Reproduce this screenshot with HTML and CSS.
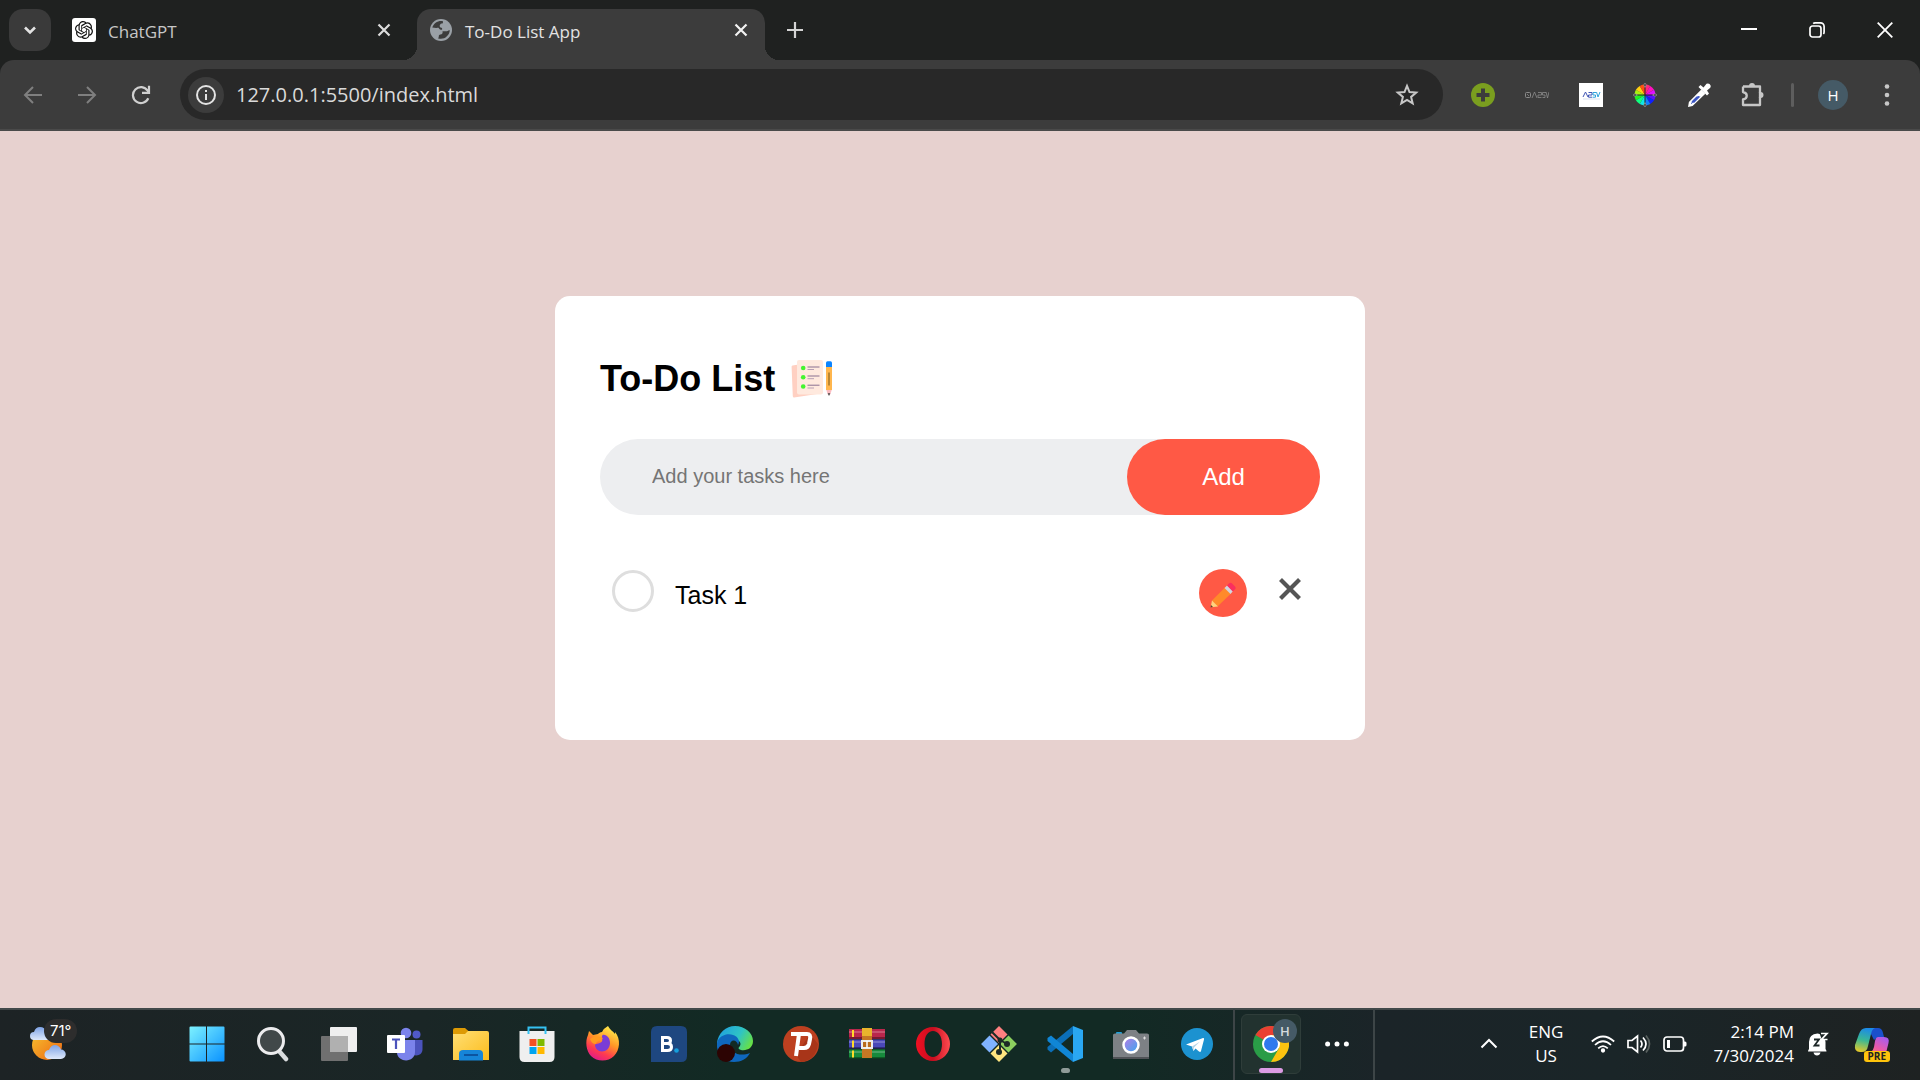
FILE: index.html
```html
<!DOCTYPE html>
<html lang="en">
<head>
<meta charset="utf-8">
<title>To-Do List App</title>
<link rel="stylesheet" href="styles.css">
</head>
<body>
<header class="browser">
  <div class="tab-strip">
    <button class="tab-search" aria-label="Search tabs"><svg width="14" height="14" viewBox="0 0 14 14"><path d="M2 4.5l5 5 5-5" fill="none" stroke="#e3e3e3" stroke-width="2.6"/></svg></button>
    <div class="tab">
      <svg class="favicon" width="24" height="24" viewBox="0 0 24 24"><rect width="24" height="24" rx="3" fill="#fff"/><path transform="translate(3 3) scale(.75)" fill="#111" d="M22.2819 9.8211a5.9847 5.9847 0 0 0-.5157-4.9108 6.0462 6.0462 0 0 0-6.5098-2.9A6.0651 6.0651 0 0 0 4.9807 4.1818a5.9847 5.9847 0 0 0-3.9977 2.9 6.0462 6.0462 0 0 0 .7427 7.0966 5.98 5.98 0 0 0 .511 4.9107 6.051 6.051 0 0 0 6.5146 2.9001A5.9847 5.9847 0 0 0 13.2599 24a6.0557 6.0557 0 0 0 5.7718-4.2058 5.9894 5.9894 0 0 0 3.9977-2.9001 6.0557 6.0557 0 0 0-.7475-7.0729zm-9.022 12.6081a4.4755 4.4755 0 0 1-2.8764-1.0408l.1419-.0804 4.7783-2.7582a.7948.7948 0 0 0 .3927-.6813v-6.7369l2.02 1.1686a.071.071 0 0 1 .038.052v5.5826a4.504 4.504 0 0 1-4.4945 4.4944zm-9.6607-4.1254a4.4708 4.4708 0 0 1-.5346-3.0137l.142.0852 4.783 2.7582a.7712.7712 0 0 0 .7806 0l5.8428-3.3685v2.3324a.0804.0804 0 0 1-.0332.0615L9.74 19.9502a4.4992 4.4992 0 0 1-6.1408-1.6464zM2.3408 7.8956a4.485 4.485 0 0 1 2.3655-1.9728V11.6a.7664.7664 0 0 0 .3879.6765l5.8144 3.3543-2.0201 1.1685a.0757.0757 0 0 1-.071 0l-4.8303-2.7865A4.504 4.504 0 0 1 2.3408 7.872zm16.5963 3.8558L13.1038 8.364 15.1192 7.2a.0757.0757 0 0 1 .071 0l4.8303 2.7913a4.4944 4.4944 0 0 1-.6765 8.1042v-5.6772a.79.79 0 0 0-.407-.667zm2.0107-3.0231l-.142-.0852-4.7735-2.7818a.7759.7759 0 0 0-.7854 0L9.409 9.2297V6.8974a.0662.0662 0 0 1 .0284-.0615l4.8303-2.7866a4.4992 4.4992 0 0 1 6.6802 4.66zM8.3065 12.863l-2.02-1.1638a.0804.0804 0 0 1-.038-.0567V6.0742a4.4992 4.4992 0 0 1 7.3757-3.4537l-.142.0805L8.704 5.459a.7948.7948 0 0 0-.3927.6813zm1.0976-2.3654l2.602-1.4998 2.6069 1.4998v2.9994l-2.5974 1.4997-2.6067-1.4997Z"/></svg>
      <span class="tab-title">ChatGPT</span>
      <button class="tab-close" aria-label="Close ChatGPT"><svg width="14" height="14" viewBox="0 0 14 14"><path d="M1.5 1.5l11 11M12.5 1.5l-11 11" stroke="#dcdcdc" stroke-width="2.2"/></svg></button>
    </div>
    <div class="tab tab-active">
      <svg class="favicon" width="24" height="24" viewBox="0 0 24 24"><circle cx="12" cy="12" r="11" fill="#9aa0a6"/><path fill="#3c3c3c" d="M13.5 3C9 2.3 4.6 5 3.300 9.600c1.800.3 4.200.4 6.200.2.800 1.700 2 2 3.500 2 .4-.9.200-1.700-.6-2.100-1.500-.3-2-1.300-1.600-2.500.4-1.300 1.400-1.700 2.700-1.700.700-.8.700-1.800 0-2.500zM20.800 12.200c-1.100-.2-1.900.7-2.900 1-1.500.500-2.800-.3-4.500.200.700 1.300-.2 2.700-2 3.100-1.300.2-1.700 1-1.600 2 .1.800-.2 1.300-.9 1.700 5.600 2 11.500-2 11.900-8z"/></svg>
      <span class="tab-title">To-Do List App</span>
      <button class="tab-close" aria-label="Close To-Do List App"><svg width="14" height="14" viewBox="0 0 14 14"><path d="M1.5 1.5l11 11M12.5 1.5l-11 11" stroke="#f2f2f2" stroke-width="2.2"/></svg></button>
    </div>
    <button class="new-tab" aria-label="New tab"><svg width="16" height="16" viewBox="0 0 16 16"><path d="M8 0v16M0 8h16" stroke="#d4d4d4" stroke-width="2.2"/></svg></button>
    <div class="window-controls">
      <button aria-label="Minimize"><svg width="16" height="16" viewBox="0 0 16 16"><path d="M0 7h16" stroke="#fff" stroke-width="2"/></svg></button>
      <button aria-label="Restore"><svg width="16" height="16" viewBox="0 0 16 16" fill="none" stroke="#fff" stroke-width="1.7"><rect x="1" y="4" width="11" height="11" rx="2.5"/><path d="M4.2 1.6C4.8 1 5.5.9 6 .9h5.500a3.600 3.600 0 0 1 3.600 3.600V10c0 .8-.2 1.500-.7 2"/></svg></button>
      <button aria-label="Close"><svg width="16" height="16" viewBox="0 0 16 16"><path d="M.7.7l14.600 14.600M15.300.7L.7 15.300" stroke="#fff" stroke-width="1.8"/></svg></button>
    </div>
  </div>
  <div class="toolbar">
    <nav class="nav-buttons">
      <button aria-label="Back"><svg width="20" height="20" viewBox="0 0 20 20" fill="none" stroke="#7f7f7f" stroke-width="2"><path d="M19 10H2.500M10 2l-8 8 8 8"/></svg></button>
      <button aria-label="Forward"><svg width="20" height="20" viewBox="0 0 20 20" fill="none" stroke="#7f7f7f" stroke-width="2"><path d="M1 10h16.500M10 2l8 8-8 8"/></svg></button>
      <button aria-label="Reload"><svg width="20" height="20" viewBox="0 0 20 20" fill="none" stroke="#d0d0d0" stroke-width="2.2"><path d="M17.300 13.300A8 8 0 1 1 16.600 5.600L17.800 7M18 .8v7h-7"/></svg></button>
    </nav>
    <form class="address-bar">
      <button type="button" class="site-info" aria-label="View site information"><svg width="20" height="20" viewBox="0 0 20 20"><circle cx="10" cy="10" r="9" fill="none" stroke="#e3e3e3" stroke-width="2"/><path d="M9 9h2v6H9zM9 5h2v2H9z" fill="#e3e3e3"/></svg></button>
      <input class="url" type="text" aria-label="Address" value="127.0.0.1:5500/index.html">
      <button type="button" class="bookmark" aria-label="Bookmark this tab"><svg width="24" height="24" viewBox="0 0 24 24"><path d="M12 2.900l2.500 6.200 6.700.5-5.100 4.300 1.600 6.500L12 16.900l-5.700 3.500 1.600-6.500-5.100-4.300 6.700-.5z" fill="none" stroke="#c7c7c7" stroke-width="2"/></svg></button>
    </form>
    <div class="extensions">
      <button aria-label="Add extension"><svg width="24" height="24" viewBox="0 0 24 24"><circle cx="12" cy="12" r="12" fill="#7a9e1f"/><path d="M12 5.500v13M5.500 12h13" stroke="#3c3c3c" stroke-width="4"/></svg></button>
      <button aria-label="APSV recorder"><svg width="24" height="24" viewBox="0 0 24 24" fill="none" stroke="#8b8b8b"><rect x=".5" y="9.500" width="5" height="5" rx="1"/><path d="M2 11l2 2M7 15l2.500-6 2.500 6M13 9.500h3.500v2.500H13v2.500h3.500M21 9.500h-3.500V12H20v2.500h-2.500M21 9l1.500 6L24 9" stroke-width=".8"/></svg></button>
      <button aria-label="APSV"><svg width="24" height="24" viewBox="0 0 24 24" fill="none"><rect width="24" height="24" fill="#fff"/><path d="M4 14l2.500-5L9 14M9.500 9.500H13V12H9.500v2.200H13" stroke="#4055b5" stroke-width="1"/><path d="M17 9.500h-3V12h2.500v2.200h-3M17.500 9l1.500 5 2-5" stroke="#2ea3dc" stroke-width="1"/><path d="M4 16h17" stroke="#c9d4ea" stroke-width=".7"/></svg></button>
      <button aria-label="Color wheel"><svg width="24" height="24" viewBox="-12 -12 24 24"><g id="wheel"><path d="M0 0V-10.500A10.500 10.500 0 0 1 5.250-9.090z" fill="#ff2a7a"/><path d="M0 0L5.250-9.090A10.500 10.500 0 0 1 9.090-5.250z" fill="#ff10c0"/><path d="M0 0L9.090-5.250A10.500 10.500 0 0 1 10.500 0z" fill="#e010ff"/><path d="M0 0H10.500A10.500 10.500 0 0 1 9.090 5.250z" fill="#5a10ff"/><path d="M0 0L9.090 5.250A10.500 10.500 0 0 1 5.250 9.090z" fill="#1020ff"/><path d="M0 0L5.250 9.090A10.500 10.500 0 0 1 0 10.500z" fill="#1080ff"/><path d="M0 0V10.500A10.500 10.500 0 0 1-5.250 9.090z" fill="#10e8e8"/><path d="M0 0L-5.250 9.090A10.500 10.500 0 0 1-9.090 5.250z" fill="#10ff80"/><path d="M0 0L-9.090 5.250A10.500 10.500 0 0 1-10.500 0z" fill="#20f020"/><path d="M0 0H-10.500A10.500 10.500 0 0 1-9.090-5.250z" fill="#a8f010"/><path d="M0 0L-9.090-5.250A10.500 10.500 0 0 1-5.250-9.090z" fill="#ffd010"/><path d="M0 0L-5.250-9.090A10.500 10.500 0 0 1 0-10.500z" fill="#ff5010"/></g><path d="M0-8v16M-8 0H8" stroke="#222" stroke-width="1"/><path d="M0-12l1.300 2L0-7.500-1.300-10zM0 12l1.300-2L0 7.500-1.300 10zM-12 0l2-1.300L-7.500 0-10 1.300zM12 0l-2-1.300L7.500 0l2.500 1.300z" fill="#333" stroke="#999" stroke-width=".7"/></svg></button>
      <button aria-label="Eyedropper"><svg width="24" height="24" viewBox="0 0 24 24"><path d="M15 7.500L3 19.500 2.500 22.500 5 22 17.500 9.800" fill="#3c56c4" stroke="#fff" stroke-width="2.400"/><path d="M8.500 13L14.500 7l3 3-3 3z" fill="#fff"/><path d="M4.500 18.500l5-5h4l-6.500 6.500z" fill="#3c56c4"/><path d="M11.500 4l2-2 3 2.500L19.500.8Q22.500-.2 23.600 2.500 24 4 23 5L20 7.500l2 3-2 2z" fill="#fff"/></svg></button>
      <button aria-label="Extensions"><svg width="26" height="26" viewBox="0 0 26 26"><path d="M3 4.500h17v6.300M20 15.200V23H3v-5.500c5-1 5-6.500 0-7.500V4.500" fill="none" stroke="#c7c7c7" stroke-width="2.300" stroke-linejoin="round"/><path d="M9 4a3 3 0 0 1 6 0zM20.500 10a3 3 0 0 1 0 6z" fill="#c7c7c7"/><path d="M20 10v6" stroke="#c7c7c7" stroke-width="2.300"/></svg></button>
    </div>
    <span class="toolbar-divider"></span>
    <button class="avatar" aria-label="Profile">H</button>
    <button class="menu" aria-label="Menu"><svg width="6" height="22" viewBox="0 0 6 22" fill="#c7c7c7"><circle cx="3" cy="2.500" r="2.300"/><circle cx="3" cy="11" r="2.300"/><circle cx="3" cy="19.500" r="2.300"/></svg></button>
  </div>
</header>

<main class="page">
  <section class="todo">
    <h1 class="todo-title">To-Do List
      <svg width="45" height="45" viewBox="0 0 45 45"><path d="M2.500 9.500l25-4 3 32L4 41.500q-1 0-1.200-1.200L1.600 11q-.2-1.300.9-1.500z" fill="#ffd0c2"/><rect x="7" y="4" width="26" height="34.500" rx="2" fill="#ffe9de"/><g fill="#43f52f"><circle cx="13.200" cy="12" r="2.300"/><circle cx="13.200" cy="21.300" r="2.300"/><circle cx="13.200" cy="30.500" r="2.300"/></g><path d="M17.500 11h12M17.500 20h12M17.500 29.200h12" stroke="#8a7090" stroke-width="1"/><path d="M17.500 13.500h6.500M17.500 22.700h6.500M17.500 32h6.500" stroke="#b7a0b4" stroke-width="1"/><rect x="36" y="8" width="6" height="26" fill="#ffb64d"/><path d="M36 11V7q0-1.700 1.500-1.700h3Q42 5.300 42 7v4z" fill="#0b84ff"/><path d="M39 16.500v13" stroke="#a87a2c" stroke-width="1.600"/><path d="M36.300 34h5.400l-1.500 4.500h-2.400z" fill="#fbbcc0"/><path d="M37.700 37.300h2.600l-1.300 2.700z" fill="#444"/></svg>
    </h1>
    <form class="todo-form">
      <input class="todo-input" type="text" placeholder="Add your tasks here" aria-label="Add your tasks here">
      <button class="todo-add" type="button">Add</button>
    </form>
    <ul class="todo-list">
      <li class="task">
        <input class="task-check" type="checkbox" id="task-1">
        <label class="task-name" for="task-1">Task 1</label>
        <button class="task-edit" aria-label="Edit Task 1"><svg width="26" height="26" viewBox="0 0 26 26"><path d="M2 18.500L15 5.500l6 6-13.500 13z" fill="#ff8a2a"/><path d="M2 18.500l6 6L.7 25.300z" fill="#ffd27e"/><path d="M1 23l2 2-2.500.5z" fill="#5a3a2c"/><path d="M14.500 6l2.600-2.600 5.800 5.800L20.500 12z" fill="#d4d4de"/><path d="M17 3.500l2-2q1.500-1.300 3 0l3 3q1.300 1.400 0 2.800l-2.200 2.200z" fill="#fb2e5e"/></svg></button>
        <button class="task-delete" aria-label="Delete Task 1"><svg width="24" height="24" viewBox="0 0 24 24"><path d="M2.500 2.500l19 19M21.500 2.500l-19 19" stroke="#555" stroke-width="4.200"/></svg></button>
      </li>
    </ul>
  </section>
</main>

<footer class="taskbar">
  <button class="weather" aria-label="Weather">
    <svg width="40" height="36" viewBox="0 0 40 36"><defs><linearGradient id="sun" x1="0" y1="0" x2="1" y2="1"><stop offset="0" stop-color="#f7c530"/><stop offset="1" stop-color="#ee6412"/></linearGradient><linearGradient id="cloud" x1="0" y1="0" x2="0" y2="1"><stop offset="0" stop-color="#7ea3e6"/><stop offset="1" stop-color="#dfe9fb"/></linearGradient></defs><circle cx="18" cy="19" r="15" fill="url(#sun)"/><path d="M5 14a4 4 0 0 1 0-8q1.500-5 6-5 5 0 6 5h2v8z" fill="url(#cloud)"/><path d="M20 33a4.500 4.500 0 0 1 0-9q2-5 6-5t6 4.500a4.600 4.600 0 1 1 0 9.500z" fill="url(#cloud)"/></svg>
    <span class="weather-badge">71°</span>
  </button>
  <div class="apps">
    <button aria-label="Start"><svg width="36" height="36" viewBox="0 0 36 36"><defs><linearGradient id="win" x1="0" y1="0" x2="1" y2="1"><stop offset="0" stop-color="#7df2ff"/><stop offset="1" stop-color="#0a92ff"/></linearGradient></defs><path d="M1.500.5H17v17H.5v-16a1 1 0 0 1 1-1zM18 .5h16.500a1 1 0 0 1 1 1v16H18zM.5 18.500H17v17H1.500a1 1 0 0 1-1-1zM18 18.500h17.500v16a1 1 0 0 1-1 1H18z" fill="url(#win)"/></svg></button>
    <button aria-label="Search"><svg width="36" height="36" viewBox="0 0 36 36"><path d="M24 25l7 8" stroke="#d9dcde" stroke-width="4.500" stroke-linecap="round"/><circle cx="16" cy="15" r="12.500" fill="#414849" stroke="#ececee" stroke-width="3"/></svg></button>
    <button aria-label="Task view"><svg width="36" height="36" viewBox="0 0 36 36"><rect x="9" y="1" width="27" height="25" rx="1" fill="#efefef"/><rect x="0" y="10" width="27" height="25" rx="1" fill="#707070"/><path d="M9 10h18v16H9z" fill="#b0b0b0"/></svg></button>
    <button aria-label="Microsoft Teams"><svg width="36" height="36" viewBox="0 0 36 36"><circle cx="29.500" cy="8.500" r="4" fill="#5059c9"/><path d="M24 14h11.500v9c0 8-10 8-11.500 3z" fill="#4b53bc"/><circle cx="19" cy="7" r="5.300" fill="#7b83eb"/><path d="M10 14h18v12c0 11-17 11-18 1z" fill="#7b83eb"/><rect x="0" y="9" width="18" height="18" rx="1" fill="#fff"/><path d="M5 13.500h8M9 13.500V23" stroke="#4b53bc" stroke-width="2.200"/></svg></button>
    <button aria-label="File Explorer"><svg width="36" height="36" viewBox="0 0 36 36"><defs><linearGradient id="folder" x1="0" y1="0" x2="1" y2="1"><stop offset="0" stop-color="#ffdf75"/><stop offset="1" stop-color="#fcbc1c"/></linearGradient></defs><path d="M0 4q0-2 2-2h10l4 3.500V12H0z" fill="#dd9a05"/><path d="M0 8h12l3-3h19q2 0 2 2v27H0z" fill="url(#folder)"/><path d="M6 34.500V28q0-4 4-4h16q4 0 4 4v6.500z" fill="#1685d8"/><path d="M11 29h14" stroke="#0c54a0" stroke-width="2"/></svg></button>
    <button aria-label="Microsoft Store"><svg width="36" height="36" viewBox="0 0 36 36"><path d="M.5 5h35v26q0 5-5 5H5.500q-5 0-5-5z" fill="#efefef"/><path d="M9.500 8V1.500h17V8" fill="none" stroke="#35c1f1" stroke-width="2"/><path d="M10.500 13h7v7h-7z" fill="#f25022"/><path d="M18.500 13h7v7h-7z" fill="#7fba00"/><path d="M10.500 21h7v7h-7z" fill="#00a4ef"/><path d="M18.500 21h7v7h-7z" fill="#ffb900"/></svg></button>
    <button aria-label="Firefox"><svg width="36" height="36" viewBox="0 0 36 36"><defs><linearGradient id="fox" x1=".8" y1="0" x2=".3" y2="1"><stop offset="0" stop-color="#fff44f"/><stop offset=".45" stop-color="#ff9626"/><stop offset=".75" stop-color="#ff3a50"/><stop offset="1" stop-color="#e01a8b"/></linearGradient></defs><path d="M23 0c2 4 5 5 7 8q0-1 0-2c6 7 5 18-1 24-6 6-17 6-23 0C1 25 0 15 3 9l1-4 4 4 5-1c1-1 2-2 4-2q2-4 6-6z" fill="url(#fox)"/><path d="M17.500 9c4-1 7.500 3 7.500 8s-4 8.500-8 8.500-7-3-7-7c2-1 5-1 7-3 1-2-1-4 .5-6.500z" fill="#7a3cd6"/><path d="M5 13c5-4 9-2 13-1-2 3-7 3-7 6-3 0-5-2-6-5z" fill="#ff9a1f"/></svg></button>
    <button aria-label="Booking"><svg width="36" height="36" viewBox="0 0 36 36"><path d="M6 0h24q6 0 6 6v24q0 6-6 6H0V6q0-6 6-6z" fill="#1e4780"/><path d="M11.500 11.500h4.500q3.500 0 3.500 3t-3.500 3h-4.500zM11.500 17.500h5q4 0 4 3.500t-4 3.500h-5z" fill="none" stroke="#fff" stroke-width="3"/><circle cx="25.500" cy="24.500" r="2.300" fill="#159fdc"/></svg></button>
    <button aria-label="Microsoft Edge"><svg width="36" height="36" viewBox="0 0 36 36"><defs><linearGradient id="edge" x1="0" y1=".2" x2="1" y2=".6"><stop offset="0" stop-color="#1f9fe0"/><stop offset=".6" stop-color="#2fc4c4"/><stop offset="1" stop-color="#66e048"/></linearGradient></defs><path d="M0 17C1 7 9 0 18 0c10 0 18 7 18 15 0 7-6 10-12 9-3-1-3-2-1-4 2-4-2-7-8-7C8 13 2 17 0 22z" fill="url(#edge)"/><path d="M0 17C2 9 11 7 16 9c6 2 7 7 5 10-1-6-8-6-8 0 0 8 10 12 20 8-3 6-9 9-16 9C7 36-1 28 0 17z" fill="#0f67bd"/><circle cx="9" cy="27" r="9" fill="#2c0403"/></svg></button>
    <button aria-label="Psiphon"><svg width="36" height="36" viewBox="0 0 36 36"><circle cx="18" cy="18" r="18" fill="#bd4020"/><path d="M18 36L13 29 27 8l8 10q-2 16-17 18z" fill="#a83519"/><path d="M8 8h16q4 0 3 5l-1 5q-1 4-5 4h-5M16 8l-3 22" fill="none" stroke="#fff" stroke-width="4"/></svg></button>
    <button aria-label="WinRAR"><svg width="36" height="36" viewBox="0 0 36 36"><path d="M0 3h36v10H0z" fill="#b9274c"/><path d="M0 13.500h36v9H0z" fill="#4a48b8"/><path d="M0 23.500h36v9H0z" fill="#178a3c"/><path d="M0 6h36M0 16h36M0 26h36" stroke="#fff" stroke-opacity=".2" stroke-width="2"/><path d="M0 12h36M0 22h36M0 32h36" stroke="#000" stroke-opacity=".35" stroke-width="2"/><path d="M4 4v7M4 14.500v7M4 24.500v7" stroke="#ffdb2a" stroke-width="2"/><path d="M13 2h10v8H13z" fill="#e9b52c"/><path d="M13 10h10v22H13z" fill="#c57824"/><rect x="13" y="15" width="10" height="7" fill="#b96a1c" stroke="#ececec" stroke-width="2"/><path d="M18 15v7" stroke="#fff" stroke-width="1.500"/></svg></button>
    <button aria-label="Opera"><svg width="36" height="36" viewBox="0 0 36 36"><defs><linearGradient id="opera"><stop offset="0" stop-color="#f01022"/><stop offset=".5" stop-color="#c80d1f"/><stop offset="1" stop-color="#ff4b50"/></linearGradient></defs><path fill-rule="evenodd" d="M18 1a17 17 0 1 1 0 34 17 17 0 0 1 0-34zm0 4c-5 0-8.500 5-8.500 13S13 31 18 31s9-5 9-13S23 5 18 5z" fill="url(#opera)"/></svg></button>
    <button aria-label="Git"><svg width="36" height="36" viewBox="0 0 36 36"><g transform="rotate(45 18 18)"><path d="M5.300 5.300h12v12h-12z" fill="#ff8080"/><path d="M18.700 5.300h12v12h-12z" fill="#8ccf5f"/><path d="M5.300 18.700h12v12h-12z" fill="#80b3ff"/><path d="M18.700 18.700h12v12h-12z" fill="#ffe680"/></g><path d="M10 5l9 9v11M19 14l7 4" fill="none" stroke="#1c2b26" stroke-width="2"/><g fill="#1c2b26"><circle cx="18" cy="26" r="3"/><circle cx="26" cy="18" r="3"/><circle cx="19" cy="14" r="2.500"/></g></svg></button>
    <button class="is-running" aria-label="Visual Studio Code"><svg width="36" height="36" viewBox="0 0 36 36"><path d="M26 8L4 26.500l-3.500-3V21L26 0z" fill="#0b6fb8"/><path d="M26 28L4 9.500.5 12v3L26 36z" fill="#1086d6"/><path d="M26 0l10 4v28l-10 4z" fill="#2aa7f2"/></svg></button>
    <button aria-label="Camera"><svg width="36" height="36" viewBox="0 0 36 36"><defs><linearGradient id="lens" x1="0" y1="0" x2="1" y2="1"><stop offset="0" stop-color="#b87be6"/><stop offset="1" stop-color="#39a8ee"/></linearGradient></defs><path d="M3 9V7q0-1 1-1h4q1 0 1 1v2z" fill="#1da1dc"/><path d="M0 9q0-1.500 2-1.500h9L14 4h9l3 3.500h8q2 0 2 1.500v24H0z" fill="#7d8185"/><path d="M0 31h36v2H0z" fill="#505357"/><circle cx="18" cy="19" r="7.500" fill="url(#lens)" stroke="#fff" stroke-width="2.500"/><path d="M31.500 10.500v3M30 12h3" stroke="#ddd"/></svg></button>
    <button aria-label="Telegram"><svg width="36" height="36" viewBox="0 0 36 36"><circle cx="18" cy="18" r="16" fill="#1c92d0"/><path d="M7 18.500L24 12q1.500-.3 1 1.500l-3 11.500q-.5 1.500-2 .5L16.500 22.500 14.500 25l-1.500-4.500z" fill="#fff"/><path d="M13 20.500L21 15.500l-6 6-.7 3.500z" fill="#b7d5e8"/></svg></button>
    <span class="taskbar-divider"></span>
    <button class="is-active" aria-label="Google Chrome">
      <svg width="36" height="36" viewBox="0 0 36 36"><circle cx="18" cy="18" r="18" fill="#2a9c47"/><path d="M18 18L2.400 9A18 18 0 0 1 33.600 9H18z" fill="#ea3f31"/><path d="M18 9h15.600A18 18 0 0 1 18 36l7.800-13.500z" fill="#fdc20f"/><circle cx="18" cy="18" r="9" fill="#fff"/><circle cx="18" cy="18" r="7" fill="#2f79ee"/></svg>
      <span class="profile-badge">H</span>
    </button>
    <button aria-label="More apps"><svg width="24" height="6" viewBox="0 0 24 6" fill="#fff"><circle cx="2.600" cy="3" r="2.500"/><circle cx="12" cy="3" r="2.500"/><circle cx="21.400" cy="3" r="2.500"/></svg></button>
    <span class="taskbar-divider"></span>
  </div>
  <div class="tray">
    <button class="tray-more" aria-label="Show hidden icons"><svg width="24" height="24" viewBox="0 0 24 24"><path d="M4.500 15.500L12 8l7.500 7.500" fill="none" stroke="#fff" stroke-width="2"/></svg></button>
    <button class="language">ENG<br>US</button>
    <button class="status" aria-label="Network, volume and battery">
      <svg width="24" height="24" viewBox="0 0 24 24" fill="none" stroke="#fff" stroke-width="1.700"><path d="M.8 9.500q11.200-10 22.400 0M4 13q8-7.500 16 0M7.200 16.300q4.800-4.500 9.600 0"/><circle cx="12" cy="18.500" r="1.300" fill="#fff"/></svg>
      <svg width="24" height="24" viewBox="0 0 24 24" fill="none" stroke="#fff" stroke-width="1.700"><path d="M1 8.500h4L10.500 4v16L5 15.500H1zM13.500 8.500q3 3.500 0 7M16 5.500q6 6.500 0 13"/><path d="M19 3.500q7 8.500 0 17" stroke="#59615f"/></svg>
      <svg width="24" height="24" viewBox="0 0 24 24" fill="none" stroke="#fff" stroke-width="1.700"><rect x="1" y="5" width="19.500" height="14" rx="3"/><path d="M4 8h3v8H4z" fill="#fff" stroke="none"/><path d="M20.500 9.500h1.500q1.500 0 1.500 1.500v2q0 1.500-1.500 1.500h-1.500z" fill="#fff" stroke="none"/></svg>
    </button>
    <button class="clock">2:14 PM<br>7/30/2024</button>
    <button class="bell" aria-label="Notifications"><svg width="24" height="26" viewBox="0 0 24 26"><path d="M3 18V11q0-8 8.500-8.500 8 .5 8 8.500v7q1 1 1 2.500H2Q2 19 3 18zM7.500 21.500h7q-.7 3-3.500 3t-3.500-3z" fill="#fff"/><path d="M13 1h8v8h-5z" fill="#1b2525"/><path d="M8 8.500h5L8.500 14.500h5" fill="none" stroke="#1b2525" stroke-width="1.800"/><path d="M15 2.500h6L15.500 8.500h6" fill="none" stroke="#fff" stroke-width="1.700"/></svg></button>
    <button class="copilot" aria-label="Copilot">
      <svg width="36" height="36" viewBox="0 0 36 36"><defs><linearGradient id="cp1" x1=".5" y1="0" x2=".3" y2="1"><stop offset="0" stop-color="#1c8ae8"/><stop offset=".5" stop-color="#3ab894"/><stop offset="1" stop-color="#e6c928"/></linearGradient><linearGradient id="cp2" x1=".8" y1="0" x2=".3" y2="1"><stop offset="0" stop-color="#a65cf0"/><stop offset=".5" stop-color="#ea5aa8"/><stop offset="1" stop-color="#ff8a50"/></linearGradient></defs><path d="M14 2h10q4 0 5 5l1 4h-6l-4 3z" fill="#1a50cc"/><path d="M12 2h9q-3 1-4 6l-3 12q-1 6-6 6H6q-6 0-5-7L5 8q2-6 7-6z" fill="url(#cp1)"/><path d="M24 11h6q6 0 4.500 6L32 27q-2 7-7 7H15q-4-2-2-8h4q2-1 3-5l1-6q1-4 3-4z" fill="url(#cp2)"/></svg>
      <span class="copilot-badge">PRE</span>
    </button>
  </div>
</footer>
</body>
</html>
```
FILE: styles.css
```css
* { box-sizing: border-box; }

body {
  margin: 0;
  min-height: 100vh;
  display: flex;
  flex-direction: column;
  font-family: "Liberation Sans", Arial, sans-serif;
}

button {
  display: flex;
  align-items: center;
  justify-content: center;
  padding: 0;
  border: 0;
  background: none;
  font: inherit;
  color: inherit;
}

/* Browser chrome */
.browser {
  background: #1f2120;
  color: #e3e3e3;
  font-family: "Open Sans", "Segoe UI", sans-serif;
  font-size: 17px;
}

.tab-strip {
  display: flex;
  height: 60px;
  padding: 9px 1px 0 9px;
}

.tab-search {
  width: 42px;
  height: 42px;
  border-radius: 14px;
  background: #3a3a3a;
}

.tab {
  display: flex;
  align-items: center;
  width: 348px;
  height: 51px;
  padding: 0 12px 9px;
  color: #c7c7c7;
}

.tab-search + .tab { margin-left: 9px; }

.tab-title {
  flex: 1;
  margin-left: 12px;
  padding-top: 3px;
  line-height: 24px;
}

.tab-close { width: 24px; height: 24px; }

.tab-active {
  position: relative;
  margin-left: 9px;
  border-radius: 14px 14px 0 0;
  background: #3c3c3c;
  color: #e3e3e3;
}

.tab-active::before,
.tab-active::after {
  content: "";
  position: absolute;
  bottom: 0;
  width: 14px;
  height: 14px;
}

.tab-active::before {
  right: 100%;
  background: radial-gradient(circle at 0 0, transparent 14px, #3c3c3c 14px);
}

.tab-active::after {
  left: 100%;
  background: radial-gradient(circle at 100% 0, transparent 14px, #3c3c3c 14px);
}

.new-tab { width: 42px; height: 42px; margin-left: 9px; }

.window-controls { display: flex; margin-left: auto; }
.window-controls button { width: 68px; height: 42px; }

.toolbar {
  display: flex;
  align-items: center;
  padding: 9px 15px 9px 12px;
  border-bottom: 2px solid #4a4a4a;
  border-radius: 14px 14px 0 0;
  background: #3c3c3c;
}

.nav-buttons { display: flex; gap: 12px; }
.nav-buttons button { width: 42px; height: 42px; }

.address-bar {
  flex: 1;
  display: flex;
  align-items: center;
  height: 51px;
  margin: 0 22px 0 18px;
  padding: 0 18px 0 8px;
  border-radius: 26px;
  background: #282828;
}

.site-info {
  width: 36px;
  height: 36px;
  border-radius: 50%;
  background: #3c3c3c;
}

.url {
  flex: 1;
  min-width: 0;
  padding: 0 12px;
  border: 0;
  outline: 0;
  background: none;
  color: #dadada;
  font: inherit;
  font-size: 20px;
}

.bookmark { width: 36px; height: 36px; }

.extensions { display: flex; gap: 18px; }
.extensions button,
.menu { width: 36px; height: 36px; }

.toolbar-divider {
  width: 3px;
  height: 24px;
  margin: 0 24px 0 20px;
  border-radius: 2px;
  background: #5e5e5e;
}

.avatar {
  width: 30px;
  height: 30px;
  margin-right: 21px;
  border-radius: 50%;
  background: #455a66;
  color: #fff;
  font-size: 15px;
}

/* To-do page */
.page {
  flex: 1;
  padding: 165px 24px 24px;
  background: #e7d1cf;
}

.todo {
  max-width: 810px;
  margin: 0 auto;
  padding: 60px 45px 123px;
  border-radius: 15px;
  background: #fff;
}

.todo-title {
  display: flex;
  align-items: center;
  gap: 15px;
  margin: 0 0 38px;
  font-size: 36px;
  line-height: 45px;
  color: #000;
}

.todo-form {
  display: flex;
  border-radius: 38px;
  background: #edeef0;
}

.todo-input {
  flex: 1;
  min-width: 0;
  padding: 0 15px 2px 52px;
  border: 0;
  outline: 0;
  background: none;
  font: inherit;
  font-size: 20px;
}

.todo-input::placeholder { color: #757575; }

.todo-add {
  width: 193px;
  height: 76px;
  border-radius: 38px;
  background: #ff5945;
  color: #fff;
  font-size: 24px;
}

.todo-list {
  margin: 54px 0 0;
  padding: 0;
  list-style: none;
}

.task {
  display: flex;
  align-items: center;
  padding: 0 12px;
}

.task-check {
  appearance: none;
  width: 42px;
  height: 42px;
  margin: 0 0 4px;
  border: 3px solid #dedede;
  border-radius: 50%;
}

.task-name {
  flex: 1;
  padding-top: 4px;
  margin-left: 21px;
  font-size: 25px;
  line-height: 30px;
}

.task-edit {
  width: 48px;
  height: 48px;
  border-radius: 50%;
  background: #ff5945;
}

.task-edit svg { margin-top: 3px; }

.task-delete {
  width: 36px;
  height: 48px;
  margin-left: 25px;
  padding-bottom: 9px;
}

/* Taskbar */
.taskbar {
  display: flex;
  align-items: center;
  height: 72px;
  padding-bottom: 2px;
  border-top: 2px solid #42494a;
  background: linear-gradient(90deg, #1d2325 0%, #1a2626 22%, #122a24 38%, #122a24 58%, #1b2428 72%, #1a2528 84%, #1e2222 100%);
  color: #fff;
  font-family: "Open Sans", "Segoe UI", sans-serif;
  font-size: 17px;
  line-height: 24px;
}

.weather {
  position: relative;
  width: 48px;
  height: 60px;
  margin-left: 25px;
}

.weather-badge {
  position: absolute;
  top: 5px;
  left: 19px;
  padding: 0 6px;
  border-radius: 12px;
  background: #2d2d2d;
  font-family: Inter, sans-serif;
  font-size: 15px;
}

.apps {
  display: flex;
  align-items: center;
  gap: 6px;
  margin-left: 104px;
}

.apps button {
  position: relative;
  width: 60px;
  height: 60px;
}

.apps .is-running::after,
.apps .is-active::after {
  content: "";
  position: absolute;
  bottom: 1px;
  width: 9px;
  height: 5px;
  border-radius: 3px;
  background: #8f9b98;
}

.apps .is-active {
  border: 1px solid #2f3d3a;
  border-radius: 6px;
  background: #22322f;
}

.apps .is-active::after {
  bottom: 0;
  width: 24px;
  background: #dc9be4;
}

.profile-badge {
  position: absolute;
  top: 4px;
  right: 3px;
  width: 24px;
  height: 24px;
  border-radius: 50%;
  background: #455a66;
  color: #d5dadd;
  font-size: 13px;
  font-weight: 600;
}

.taskbar-divider {
  width: 2px;
  height: 72px;
  margin-bottom: -2px;
  background: #3d4547;
}

.tray {
  display: flex;
  align-items: center;
  margin-left: auto;
  padding-right: 24px;
}

.tray-more { width: 24px; height: 48px; }

.language { width: 36px; margin: 0 27px; }

.status { gap: 12px; }

.clock {
  min-width: 83px;
  margin: 0 9px 0 24px;
  justify-content: flex-end;
  text-align: right;
}

.bell { width: 30px; height: 48px; }

.copilot {
  position: relative;
  width: 48px;
  height: 48px;
  margin-left: 15px;
}

.copilot-badge {
  position: absolute;
  right: 6px;
  bottom: 6px;
  padding: 0 4px;
  border-radius: 3px;
  background: #ffc40c;
  color: #222;
  font-size: 10px;
  font-weight: 700;
  line-height: 11px;
}
```
